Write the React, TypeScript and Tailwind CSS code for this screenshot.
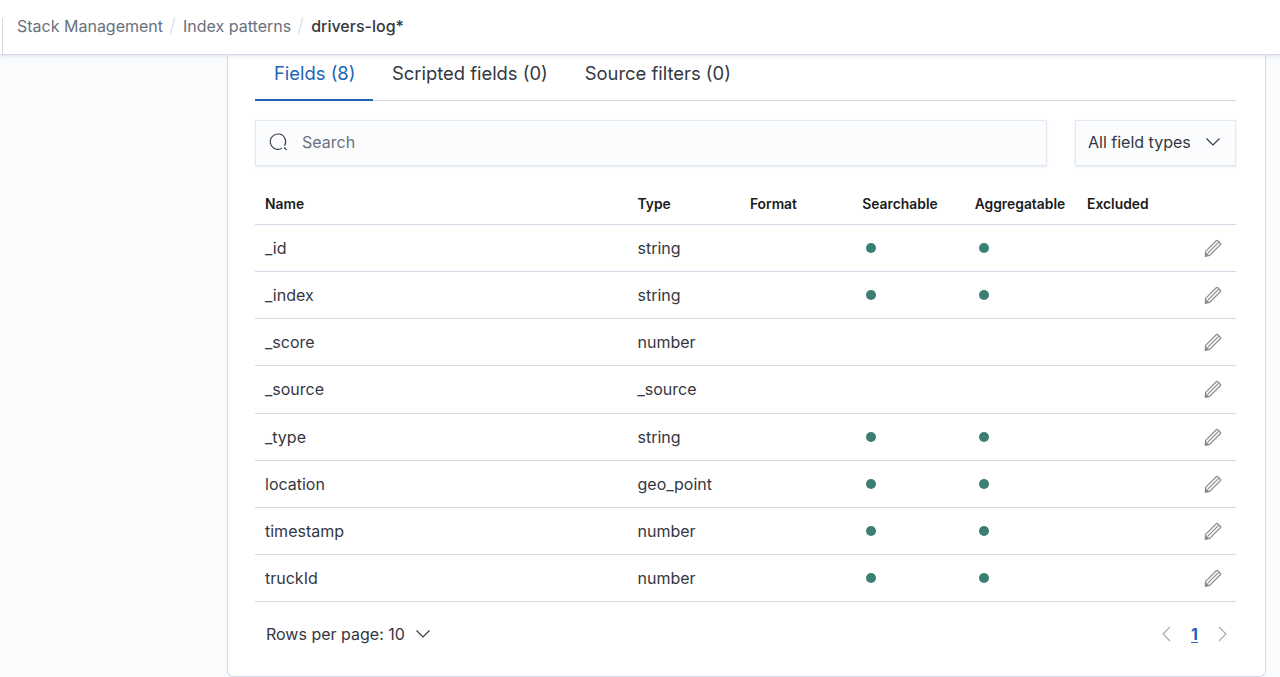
const fields = [
  { name: '_id', type: 'string', on: true },
  { name: '_index', type: 'string', on: true },
  { name: '_score', type: 'number', on: false },
  { name: '_source', type: '_source', on: false },
  { name: '_type', type: 'string', on: true },
  { name: 'location', type: 'geo_point', on: true },
  { name: 'timestamp', type: 'number', on: true },
  { name: 'truckId', type: 'number', on: true },
];

const cols = 'grid grid-cols-[372.5px_112.4px_112.4px_112.4px_112.4px_112.4px_46.5px]';

const Pencil = () => (
  <svg width="18" height="18" viewBox="0 0 18 18" fill="none" stroke="#8f8f8f" strokeWidth="1.3">
    <path d="M1.6 12.4 12.3 1.7c.4-.4 1-.4 1.4 0l2.6 2.6c.4.4.4 1 0 1.4L5.6 16.4l-4.2.9z" />
    <path d="M3.6 14.4 14.6 3.4" />
    <path d="M1.3 13 1 17.6l4.6-1z" fill="#8a8a8a" stroke="none" />
  </svg>
);

const Search = () => (
  <svg width="20" height="20" viewBox="0 0 20 20" fill="none" stroke="#343741" strokeWidth="1.1">
    <path d="M13.2 16.1A7.7 7.7 0 1 1 15.6 13.6" />
    <path d="m15 15.4 2.6 2.6" />
  </svg>
);

const Down = ({ className = '' }: { className?: string }) => (
  <svg width="16" height="16" viewBox="0 0 16 16" fill="none" stroke="#343741" strokeWidth="1.1" className={className}>
    <path d="M1.5 4.5 8 11 14.5 4.5" />
  </svg>
);

const Side = ({ flip, className = '' }: { flip?: boolean; className?: string }) => (
  <svg width="10" height="16" viewBox="0 0 10 16" fill="none" stroke="#a5abb5" strokeWidth="1.2" className={className}>
    <path d={flip ? 'M2 1l7 7-7 7' : 'M8 1 1 8l7 7'} />
  </svg>
);

const Dot = () => <span className="ml-[4px] block h-[10px] w-[10px] rounded-full bg-[#3b7f72]" />;

export default function App() {
  return (
    <div className="flex h-[677px] w-[1280px] flex-col overflow-hidden bg-[#f9fbfd] font-['Inter',sans-serif] text-[#343741]">
      <header className="z-10 flex h-[55px] shrink-0 items-center border-b border-[#d3dae6] bg-white shadow-[0_2px_3px_rgba(152,162,179,0.2)]">
        <div className="h-[36px] w-[3px] self-end border-r border-[#d3dae6]" />
        <nav className="ml-[14px] flex -translate-y-px items-center text-[16px] text-[#69707d]">
          <span>Stack Management</span>
          <span className="mx-[9px] h-[18px] w-px rotate-[15deg] bg-[#d3dae6]" />
          <span className="ml-[1px]">Index patterns</span>
          <span className="mx-[9px] h-[18px] w-px rotate-[15deg] bg-[#d3dae6]" />
          <span className="ml-[1px] font-medium text-[#343741]">drivers-log*</span>
        </nav>
      </header>

      <main className="ml-[227px] flex h-[622px] w-[1039px] flex-col rounded-b-[6px] border-x border-b border-[#d3dae6] bg-white pl-[27px] pr-[29px]">
        <div className="flex h-[46px] shrink-0 border-b border-[#d3dae6] text-[18.4px]">
          <div className="h-[46px] border-b-2 border-[#1f63b5] pl-[19px] pr-[18px] pt-[5px] text-[#1f63b5]">Fields (8)</div>
          <div className="pl-[18.5px] pr-[18.5px] pt-[5px]">Scripted fields (0)</div>
          <div className="pl-[18.5px] pr-[18.5px] pt-[5px]">Source filters (0)</div>
        </div>

        <div className="mt-[19px] flex h-[46px] shrink-0 justify-between text-[16px]">
          <div className="flex w-[792px] items-center border border-[#e4e8f0] bg-[#fbfcfd] pb-[2px] pl-[13px] shadow-[0_1px_2px_rgba(152,162,179,0.25)]">
            <Search />
            <span className="ml-[13px] text-[#69707d]">Search</span>
          </div>
          <div className="flex w-[161px] items-center justify-between border border-[#e4e8f0] bg-[#fbfcfd] pb-[2px] pl-[12px] pr-[14px] shadow-[0_1px_2px_rgba(152,162,179,0.25)]">
            <span>All field types</span>
            <Down />
          </div>
        </div>

        <div className={`${cols} mt-[18px] h-[41px] shrink-0 items-center border-b border-[#d3dae6] pt-[1px] text-[13.85px] font-semibold text-[#1a1c21]`}>
          <span className="pl-[10px]">Name</span>
          <span className="pl-[10px]">Type</span>
          <span className="pl-[10px]">Format</span>
          <span className="pl-[10px]">Searchable</span>
          <span className="pl-[10px]">Aggregatable</span>
          <span className="pl-[10px]">Excluded</span>
          <span />
        </div>

        {fields.map((f) => (
          <div key={f.name} className={`${cols} h-[47.15px] shrink-0 items-center border-b border-[#d3dae6] text-[16px]`}>
            <span className="pl-[10px]">{f.name}</span>
            <span className="pl-[10px]">{f.type}</span>
            <span />
            <span className="pl-[10px]">{f.on && <Dot />}</span>
            <span className="pl-[10px]">{f.on && <Dot />}</span>
            <span />
            <span className="flex justify-end pr-[14px]"><Pencil /></span>
          </div>
        ))}

        <div className="flex flex-1 items-start justify-between pt-[20px] text-[16px]">
          <div className="flex items-center pl-[11px]">
            <span>Rows per page: 10</span>
            <Down className="ml-[10px]" />
          </div>
          <div className="flex items-center pr-[9px]">
            <Side />
            <span className="ml-[19px] font-bold text-[#1f63b5] underline underline-offset-2">1</span>
            <Side flip className="ml-[19px]" />
          </div>
        </div>
      </main>
    </div>
  );
}
